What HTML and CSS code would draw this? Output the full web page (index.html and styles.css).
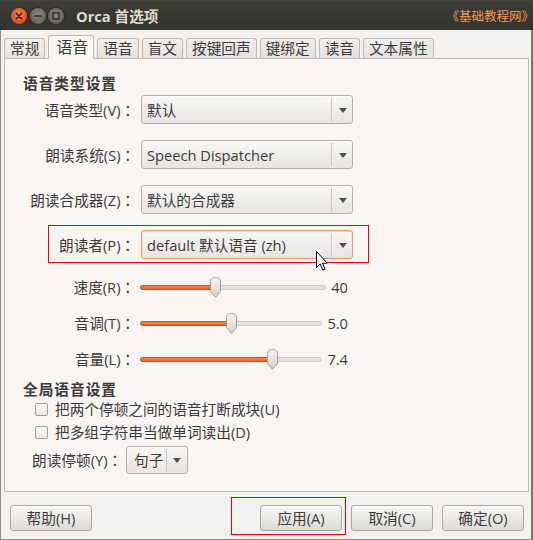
FILE: index.html
```html
<!DOCTYPE html>
<html lang="zh">
<head>
<meta charset="utf-8">
<title>Orca 首选项</title>
<link rel="stylesheet" href="styles.css">
</head>
<body>
<div class="window">
  <div class="titlebar">
    <div class="wbtns">
      <span class="wbtn close"><svg width="16" height="16" viewBox="0 0 16 16"><path d="M5.3 5.3 L10.7 10.7 M10.7 5.3 L5.3 10.7" stroke="#3b2418" stroke-width="1.6" stroke-linecap="round"/></svg></span>
      <span class="wbtn min"><svg width="16" height="16" viewBox="0 0 16 16"><path d="M4.5 8 H11.5" stroke="#2e2d2a" stroke-width="1.6"/></svg></span>
      <span class="wbtn max"><svg width="16" height="16" viewBox="0 0 16 16"><rect x="5" y="5" width="6" height="6" fill="none" stroke="#2e2d2a" stroke-width="1.4"/></svg></span>
    </div>
    <div class="title">Orca 首选项</div>
    <div class="watermark"><span class="br-open">《</span>基础教程网<span class="br-close">》</span></div>
  </div>
  <div class="client">
    <div class="tabs">
      <div class="tab">常规</div>
      <div class="tab active">语音</div>
      <div class="tab">语音</div>
      <div class="tab">盲文</div>
      <div class="tab">按键回声</div>
      <div class="tab">键绑定</div>
      <div class="tab">读音</div>
      <div class="tab">文本属性</div>
    </div>
    <div class="panel">
      <div class="section-title">语音类型设置</div>
      <div class="form-rows">
        <div class="row">
          <span class="lbl">语音类型(V)<span class="colon">：</span></span>
          <div class="combo"><span class="combo-text">默认</span><span class="combo-btn"><i class="arrow"></i></span></div>
        </div>
        <div class="row">
          <span class="lbl">朗读系统(S)<span class="colon">：</span></span>
          <div class="combo"><span class="combo-text">Speech Dispatcher</span><span class="combo-btn"><i class="arrow"></i></span></div>
        </div>
        <div class="row">
          <span class="lbl">朗读合成器(Z)<span class="colon">：</span></span>
          <div class="combo"><span class="combo-text">默认的合成器</span><span class="combo-btn"><i class="arrow"></i></span></div>
        </div>
        <div class="row">
          <span class="lbl">朗读者(P)<span class="colon">：</span></span>
          <div class="combo focus marked"><span class="combo-text">default 默认语音 (zh)</span><span class="combo-btn"><i class="arrow"></i></span>
            <svg class="cursor" width="12" height="20" viewBox="0 0 12 20"><path d="M0.5 0.5 L0.5 16.5 L4.2 13 L6.8 19 L9 18 L6.5 12.2 L11.3 12.2 Z" fill="#fff" stroke="#000" stroke-width="1" stroke-linejoin="miter"/></svg>
          </div>
        </div>
      </div>
      <div class="sliders">
        <div class="srow">
          <span class="lbl">速度(R)<span class="colon">：</span></span>
          <div class="slider">
            <div class="track" style="--v:0.40"><div class="fill"></div><svg class="thumb" width="11" height="21" viewBox="0 0 11 21"><defs><linearGradient id="tg1" x1="0" y1="0" x2="0" y2="1"><stop offset="0" stop-color="#f5f5f4"/><stop offset="1" stop-color="#d3d1cd"/></linearGradient></defs><path d="M0.5 4.5 Q0.5 0.5 5.5 0.5 Q10.5 0.5 10.5 4.5 V14.5 L5.5 20.3 L0.5 14.5 Z" fill="url(#tg1)" stroke="#9f9c97"/></svg></div>
            <span class="val">40</span>
          </div>
        </div>
        <div class="srow">
          <span class="lbl">音调(T)<span class="colon">：</span></span>
          <div class="slider">
            <div class="track" style="--v:0.50"><div class="fill"></div><svg class="thumb" width="11" height="21" viewBox="0 0 11 21"><path d="M0.5 4.5 Q0.5 0.5 5.5 0.5 Q10.5 0.5 10.5 4.5 V14.5 L5.5 20.3 L0.5 14.5 Z" fill="url(#tg1)" stroke="#9f9c97"/></svg></div>
            <span class="val">5.0</span>
          </div>
        </div>
        <div class="srow">
          <span class="lbl">音量(L)<span class="colon">：</span></span>
          <div class="slider">
            <div class="track" style="--v:0.74"><div class="fill"></div><svg class="thumb" width="11" height="21" viewBox="0 0 11 21"><path d="M0.5 4.5 Q0.5 0.5 5.5 0.5 Q10.5 0.5 10.5 4.5 V14.5 L5.5 20.3 L0.5 14.5 Z" fill="url(#tg1)" stroke="#9f9c97"/></svg></div>
            <span class="val">7.4</span>
          </div>
        </div>
      </div>
      <div class="section-title second">全局语音设置</div>
      <div class="checks">
        <label class="check-row"><span class="cb"></span><span>把两个停顿之间的语音打断成块(U)</span></label>
        <label class="check-row"><span class="cb"></span><span>把多组字符串当做单词读出(D)</span></label>
      </div>
      <div class="pause-row">
        <span class="plbl">朗读停顿(Y)<span class="colon">：</span></span>
        <div class="combo small"><span class="combo-text">句子</span><span class="combo-btn"><i class="arrow"></i></span></div>
      </div>
    </div>
    <div class="actions">
      <button class="btn">帮助(H)</button>
      <button class="btn apply marked">应用(A)</button>
      <button class="btn">取消(C)</button>
      <button class="btn">确定(O)</button>
    </div>
  </div>
</div>
</body>
</html>
```
FILE: styles.css
```css
html, body {
  margin: 0;
  padding: 0;
  background: #f2f1f0;
}
body {
  font-family: "Open Sans", "Noto Sans CJK SC", sans-serif;
  font-size: 14.67px;
  color: #3c3c3c;
}
.window {
  width: 533px;
  height: 540px;
  display: flex;
  flex-direction: column;
  overflow: hidden;
  background: #f2f1f0;
}
.titlebar {
  height: 30px;
  flex: none;
  display: flex;
  align-items: center;
  background: linear-gradient(#4a4945 0, #3d3c38 2px, #33322e 100%);
  box-sizing: border-box;
  padding-top: 2px;
}
.wbtns {
  display: flex;
  gap: 2.5px;
  padding-left: 11px;
}
.wbtn {
  width: 16px;
  height: 16px;
  border-radius: 50%;
  box-sizing: border-box;
  display: flex;
}
.wbtn svg { display: block; }
.wbtn.close {
  background: radial-gradient(circle at 50% 40%, #f4804f 0, #e55a25 55%, #b8431a 100%);
  box-shadow: 0 0 0 1px #2a2926;
}
.wbtn.min, .wbtn.max {
  background: radial-gradient(circle at 50% 40%, #8a8780 0, #6d6a63 60%, #55534e 100%);
  box-shadow: 0 0 0 1px #2a2926;
}
.title {
  margin-left: 12px;
  color: #dfdbd2;
  font-weight: bold;
  font-size: 14.67px;
  line-height: 20px;
}
.watermark {
  margin-left: auto;
  padding-right: 5px;
  color: #f49a55;
  font-family: "Noto Sans CJK SC", sans-serif;
  font-size: 12.5px;
  line-height: 18px;
}
.br-open { margin-left: -6px; }
.br-close { letter-spacing: -6px; }

.client {
  flex: 1;
  display: flex;
  flex-direction: column;
  border-left: 1px solid #8f8d88;
  border-right: 2px solid #77756f;
  border-bottom: 1px solid #8f8d88;
}
.tabs {
  height: 28px;
  box-sizing: border-box;
  display: flex;
  align-items: flex-end;
  gap: 3px;
  padding-left: 3px;
  flex: none;
}
.tab {
  height: 20px;
  box-sizing: border-box;
  padding: 0 5px;
  border: 1px solid #bdb8b2;
  border-bottom: none;
  border-radius: 3px 3px 0 0;
  background: linear-gradient(#f1f0ee, #e3e1dd);
  line-height: 19px;
  white-space: nowrap;
}
.tab.active {
  height: 24px;
  margin-bottom: -1px;
  position: relative;
  z-index: 1;
  background: #f8f5f2;
  padding: 0 5px 0 7px;
  font-size: 16px;
  line-height: 23px;
}
.panel {
  margin: 0 2px 0 3px;
  height: 434px;
  box-sizing: border-box;
  border: 1px solid #bdb8b2;
  background: #f8f5f2;
  padding-top: 14px;
  flex: none;
}
.section-title {
  padding-left: 18px;
  line-height: 20px;
  font-weight: bold;
  letter-spacing: 1px;
  color: #3c3c3c;
}
.section-title.second {
  margin-top: 8px;
}
.form-rows {
  margin-top: 2px;
  display: flex;
  flex-direction: column;
  gap: 16px;
}
.row {
  display: flex;
  align-items: center;
  gap: 6px;
  height: 29px;
}
.lbl {
  width: 130px;
  flex: none;
  text-align: right;
  white-space: nowrap;
  line-height: 20px;
}
.colon {
  display: inline-block;
  width: 14.5px;
  text-align: center;
  font-family: "Noto Sans CJK TC", "Noto Sans CJK SC", sans-serif;
}
.combo {
  position: relative;
  width: 212px;
  height: 29px;
  box-sizing: border-box;
  border: 1px solid #b7b0aa;
  border-radius: 3px;
  background: linear-gradient(#f8f7f5, #e7e5e2);
  box-shadow: inset 0 1px #fff;
  display: flex;
  align-items: center;
}
.combo.focus {
  border-color: #e6956b;
  box-shadow: inset 0 0 0 1px #f6e3d7;
}
.combo-text {
  flex: 1;
  padding-left: 5px;
  white-space: nowrap;
  overflow: hidden;
  line-height: 20px;
}
.combo-btn {
  width: 20px;
  height: 23px;
  flex: none;
  border-left: 1px solid #c9c4bf;
  display: flex;
  align-items: center;
  justify-content: center;
}
.arrow {
  width: 0;
  height: 0;
  border-left: 4px solid transparent;
  border-right: 4px solid transparent;
  border-top: 5px solid #4e4e4e;
  margin-left: 1px;
  margin-top: 1px;
}
.combo.marked::after {
  content: "";
  position: absolute;
  left: -94px;
  right: -17px;
  top: -6px;
  bottom: -5px;
  border: 1px solid #ee0000;
  pointer-events: none;
}
.cursor {
  position: absolute;
  left: 174px;
  top: 20px;
  z-index: 3;
}
.sliders {
  margin-top: 16px;
  display: flex;
  flex-direction: column;
  gap: 12px;
}
.srow {
  display: flex;
  align-items: center;
  gap: 5px;
  height: 24px;
}
.slider {
  width: 208px;
  display: flex;
  align-items: center;
  gap: 5px;
}
.track {
  flex: 1;
  position: relative;
  height: 5px;
  box-sizing: border-box;
  border: 1px solid #cdc9c4;
  border-radius: 3px;
  background: #e3e0dd;
}
.fill {
  position: absolute;
  left: -1px;
  top: -1px;
  height: 5px;
  width: calc(var(--v) * (100% - 9px) + 6.5px);
  box-sizing: border-box;
  border: 1px solid #c4521f;
  border-radius: 3px;
  background: linear-gradient(#f08a5a, #e4662f);
}
.thumb {
  position: absolute;
  top: -9px;
  left: calc(var(--v) * (100% - 9px) - 1px);
  display: block;
}
.val {
  line-height: 20px;
  white-space: nowrap;
}
.checks {
  display: flex;
  flex-direction: column;
  gap: 3px;
}
.check-row {
  display: flex;
  align-items: center;
  gap: 7px;
  height: 20px;
  padding-left: 30px;
  line-height: 20px;
}
.cb {
  width: 13px;
  height: 13px;
  box-sizing: border-box;
  border: 1px solid #a39e98;
  border-radius: 2px;
  background: linear-gradient(#ffffff, #ebe9e6);
  flex: none;
}
.pause-row {
  margin-top: 4px;
  display: flex;
  align-items: center;
  gap: 4px;
  padding-left: 27px;
}
.plbl {
  line-height: 20px;
  white-space: nowrap;
}
.combo.small {
  width: 62px;
  height: 28px;
}
.combo.small .combo-text {
  padding-left: 7px;
}
.actions {
  display: flex;
  padding: 13px 7px 0 9px;
  gap: 9px;
}
.btn {
  width: 82px;
  height: 26px;
  box-sizing: border-box;
  border: 1px solid #a9a5a0;
  border-radius: 3px;
  background: linear-gradient(#f7f6f5, #dddbd7);
  box-shadow: inset 0 1px #ffffff;
  font-family: "Open Sans", "Noto Sans CJK SC", sans-serif;
  font-size: 14.67px;
  color: #3c3c3c;
  padding: 0;
  line-height: 22px;
  position: relative;
}
.btn.apply {
  margin-left: auto;
}
.btn.marked::after {
  content: "";
  position: absolute;
  left: -30px;
  right: -5px;
  top: -9px;
  bottom: -5px;
  border: 1px solid #ee0000;
  pointer-events: none;
}
```
